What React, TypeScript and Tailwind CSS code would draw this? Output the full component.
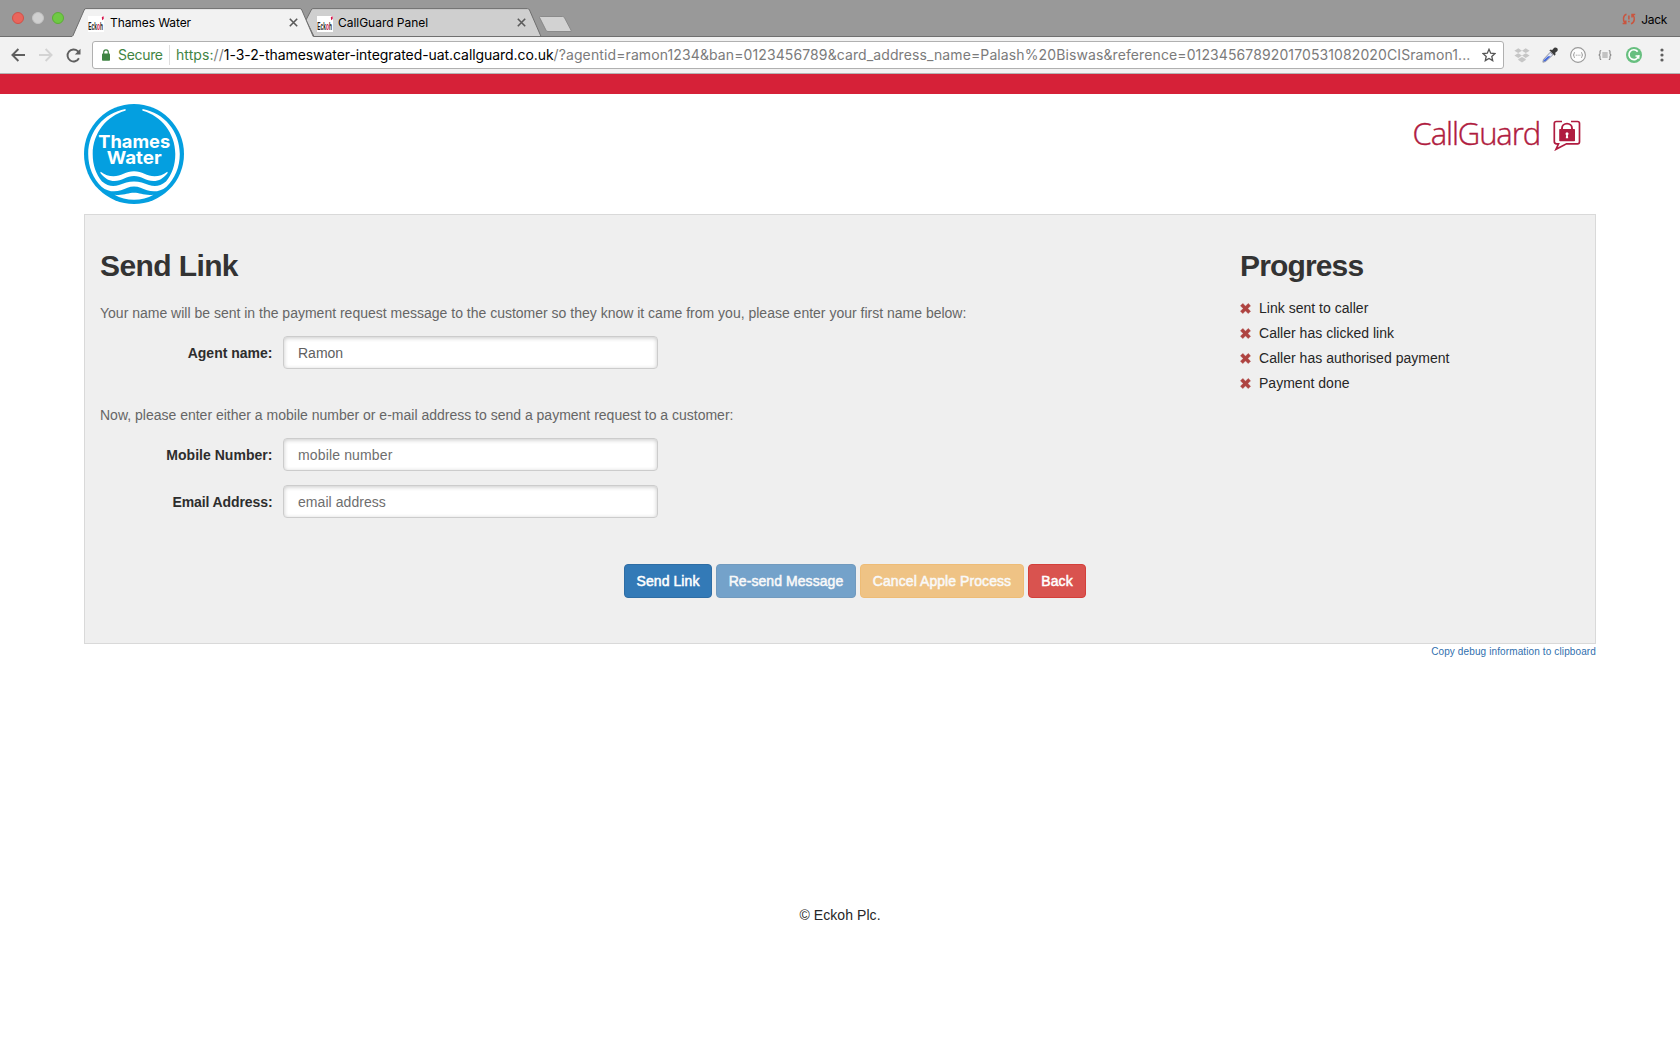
import React from "react";

const UI = "font-['Inter',sans-serif]";

function Favicon() {
  return (
    <svg width="16" height="16" viewBox="0 0 16 16" className="shrink-0">
      <rect width="16" height="16" fill="#fff" />
      <text x="0.8" y="13.800" transform="scale(0.46 1)" fontFamily="Liberation Sans, sans-serif" fontWeight="700" fontSize="10.500" fill="#1c1c1c">
        Eck<tspan fill="#d4144a">o</tspan>h
      </text>
      <path d="M13.800 1 15.700.2v2.800l-1.600 1.200z" fill="#d4144a" />
    </svg>
  );
}

function CloseX() {
  return (
    <svg width="9" height="9" viewBox="0 0 9 9" className="relative -top-px shrink-0" stroke="#5a5a5a" strokeWidth="1.6">
      <path d="M.8.8l7.4 7.4M8.2.8.8 8.2" />
    </svg>
  );
}

function TabStrip() {
  return (
    <div className="flex h-[37px] bg-[#999999]">
      <div className="flex w-[72px] shrink-0 items-center gap-2 border-b border-[#6f6f6f] pl-3">
        <span className="size-3 rounded-full border border-[#cf5148] bg-[#e9655c]" />
        <span className="size-3 rounded-full border border-[#c2c2c2] bg-[#d0d0d0]" />
        <span className="size-3 rounded-full border border-[#5bae35] bg-[#6fc944]" />
      </div>
      <div className="relative z-10 h-[37px] w-[242px] shrink-0">
        <svg width="242" height="37" viewBox="0 0 242 37" className="absolute inset-0">
          <path d="M0 37V36.5L1 36 12.2 10Q12.6 8.8 14 8.8H228Q229.300 8.800 229.800 10L241 36V37Z" fill="#f2f2f2" />
          <path d="M0 36.500L1 35.500 12.200 10Q12.600 8.600 14 8.600H228Q229.300 8.600 229.800 10L241.200 36.500" fill="none" stroke="#6f6f6f" />
        </svg>
        <div className="relative flex h-full items-center pt-[10px] pl-4 pr-[16px]">
          <Favicon />
          <span className={`relative -top-px ml-[6px] grow text-[12px] leading-4 tracking-[-0.09px] text-black ${UI}`}>Thames Water</span>
          <CloseX />
        </div>
      </div>
      <div className="relative -ml-[8px] h-[37px] w-[236px] shrink-0">
        <svg width="236" height="37" viewBox="0 0 236 37" className="absolute inset-0">
          <path d="M0 20 5.200 10Q5.600 8.600 7 8.600H221.500Q223 8.600 223.500 10L235 36.500H8Z" fill="#cfcfcf" stroke="#6f6f6f" />
        </svg>
        <div className="relative flex h-full items-center pt-[10px] pl-[11px] pr-[16px]">
          <Favicon />
          <span className={`relative -top-px ml-[5px] grow text-[12px] leading-4 tracking-[-0.03px] text-black ${UI}`}>CallGuard Panel</span>
          <CloseX />
        </div>
      </div>
      <div className="-ml-[4px] h-[37px] w-[38px] shrink-0">
        <svg width="38" height="37" viewBox="0 0 38 37">
          <path d="M2.300 16.500H24.500Q26 16.500 26.500 17.800L33.200 30.500Q33.400 31.500 32 31.500H10Q8.500 31.500 8 30.200L1.600 17.500Q1.400 16.500 2.300 16.500Z" fill="#d2d2d2" stroke="#858585" strokeWidth=".9" />
          <path d="M3 36.500H38" stroke="#6f6f6f" />
        </svg>
      </div>
      <div className="flex grow items-center justify-end border-b border-[#6f6f6f] pt-[3px] pr-[13px]">
        <svg width="14" height="12" viewBox="0 0 14 12" fill="none" stroke="#c9553f" strokeWidth="1.500" className="mr-[5px] mb-px">
          <path d="M4.500 1.300C1.200 2.200.4 7.300 3 10M.6 10.500h3.200V7.400M9 10.700c3.600-1 4.400-6 1.800-8.700M13.200 1.500H10v3.100" />
          <path d="M6.900 2.500v4M6.900 7.700v1.600" />
        </svg>
        <span className={`text-[12px] leading-4 tracking-[-0.300px] text-black ${UI}`}>Jack</span>
      </div>
    </div>
  );
}

function Toolbar() {
  return (
    <div className="flex h-[37px] items-center border-b border-[#b4b4b4] bg-[#f2f2f2]">
      <div className="flex w-[92px] shrink-0 items-center pl-[11px]">
        <svg width="14" height="14" viewBox="0 0 14 14" fill="none" stroke="#5f5f5f" strokeWidth="1.900">
          <path d="M14 7H1.600M7.400 1 1.400 7l6 6" />
        </svg>
        <svg width="14" height="14" viewBox="0 0 14 14" fill="none" stroke="#d3d3d3" strokeWidth="1.900" className="ml-[14px]">
          <path d="M0 7h12.400M6.600 1l6 6-6 6" />
        </svg>
        <svg width="15" height="15" viewBox="0 0 15 15" className="ml-[13px]">
          <path d="M12.900 10.200A6 6 0 1 1 11.800 3.200L13 4.500" fill="none" stroke="#5f5f5f" strokeWidth="1.900" />
          <path d="M14.500.8v5.700H8.800z" fill="#5f5f5f" />
        </svg>
      </div>
      <div className="flex h-7 w-[1412px] shrink-0 items-center rounded-[3px] border border-[#b0b0b0] bg-white whitespace-nowrap">
        <svg width="8" height="12" viewBox="0 0 8 12" className="ml-[9px] shrink-0">
          <rect y="4.500" width="8" height="7.200" rx=".8" fill="#3f8443" />
          <path d="M1.700 5V3.200a2.300 2.300 0 0 1 4.600 0V5" fill="none" stroke="#3f8443" strokeWidth="1.200" />
        </svg>
        <span className={`ml-2 w-[51px] text-[14px] leading-5 tracking-[-0.32px] text-[#3f8443] ${UI}`}>Secure</span>
        <span className="h-5 w-px bg-[#dedede]" />
        <span className={`ml-[6px] w-[1298px] text-[14px] leading-5 text-[#7b7b7b] ${UI}`}>
          <span className="tracking-[0.080px]"><span className="text-[#3f8443]">https:</span>//</span>
          <span className="tracking-[-0.070px] text-black">1-3-2-thameswater-integrated-uat.callguard.co.uk</span>
          <span className="tracking-[0.107px]">/?agentid=ramon1234&amp;ban=0123456789&amp;card_address_name=Palash%20Biswas&amp;reference=012345678920170531082020CISramon1...</span>
        </span>
        <svg width="14" height="14" viewBox="0 0 14 14" className="ml-[8px] shrink-0">
          <path d="M7 1.300 8.700 5.200l4.300.4-3.200 2.800.9 4.200L7 10.400l-3.700 2.200.9-4.200L1 5.600l4.300-.4z" fill="none" stroke="#555" strokeWidth="1.300" />
        </svg>
      </div>
      <div className="flex grow items-center">
        <svg width="16" height="15" viewBox="0 0 16 15" fill="#c6c6c6" className="ml-[10px]">
          <path d="M4.300.3 8 2.700 4.200 5 .4 2.700zM11.700.3l3.900 2.400L11.800 5 8 2.700zM4.200 5.300 8 7.600 4.300 10 .4 7.600zM11.800 5.300l3.800 2.300-3.900 2.400L8 7.600zM4.300 11 8 8.900l3.700 2.100v1.100L8 14.400l-3.700-2.300z" />
        </svg>
        <svg width="16" height="16" viewBox="0 0 16 16" className="ml-3">
          <path d="M8.300 5.200 10.900 7.800 3.600 14.500.9 15.200 1.500 12.400z" fill="#dfe4f4" stroke="#84889a" strokeWidth=".9" />
          <path d="M6 9.300h2.600L3.500 14l-2 .5.400-1.400z" fill="#3f66dc" />
          <path d="M7.300 3.200 9 2.400l1 .8L12.200.8a2.300 2.300 0 0 1 3.200 3.100L13 6.100l.7 1-1 1.700z" fill="#3b3b3b" />
        </svg>
        <svg width="16" height="16" viewBox="0 0 16 16" fill="none" stroke="#999" className="ml-3">
          <circle cx="8" cy="8" r="7.400" fill="#fcfcfc" strokeWidth="1.100" />
          <path d="M5 5.500q-1.200 0-1 1.300T3 8q1.200 0 1 1.300T5 10.600M11 5.500q1.200 0 1 1.300T13 8q-1.200 0-1 1.300t-1 1.300" strokeWidth=".9" />
          <path d="M5.800 8.200h4.600" strokeDasharray="1 .8" />
        </svg>
        <svg width="14" height="12" viewBox="0 0 14 12" fill="none" stroke="#878787" className="ml-[12px]">
          <path d="M3.200 1.500Q1.900 1.500 2 2.900 2.300 6 .6 6 2.300 6 2 9.100 1.900 10.500 3.200 10.500M10.800 1.500q1.300 0 1.200 1.400Q11.700 6 13.400 6 11.700 6 12 9.100q.1 1.400-1.200 1.400" strokeWidth="1.100" />
          <path d="M4.300 4h5.400M4.300 6h5.400M4.300 8h5.400" strokeWidth=".9" />
        </svg>
        <svg width="16" height="16" viewBox="0 0 16 16" className="ml-[14px]">
          <circle cx="8" cy="8" r="8" fill="#67bf7f" />
          <path d="M11.700 4.600A4.900 4.900 0 1 0 12.600 9H9.500" fill="none" stroke="#fff" strokeWidth="1.700" />
          <path d="M12.800 8.200v3.600" stroke="#fff" strokeWidth="1.200" />
        </svg>
        <svg width="4" height="14" viewBox="0 0 4 14" fill="#5f5f5f" className="ml-[18px]">
          <circle cx="2" cy="2" r="1.600" /><circle cx="2" cy="7" r="1.600" /><circle cx="2" cy="12" r="1.600" />
        </svg>
      </div>
    </div>
  );
}

function ThamesWaterLogo() {
  return (
    <svg width="100" height="100" viewBox="0 0 100 100">
      <circle cx="50" cy="50" r="50" fill="#049fe0" />
      <g fill="#fff">
        <path d="M41.300 5C20 9 4.200 27 4.200 50c0 13 5 24.500 13.300 32.700C24 88 31 88.200 37 86.200 42 84.500 45 82.500 50 82.500s8 2 13 3.700c6 2 13 1.800 19.500-3.500C90.800 74.500 95.800 63 95.800 50 95.800 27 80 9 58.700 5q-1 .9 0 1.800C77 11.800 91.300 29 91.300 50c0 11-3.300 20.300-9.300 27.500C76 82.700 70 82.700 65 80.900 60 79.100 55.500 77.400 50 77.400S40 79.100 35 80.900C30 82.700 24 82.700 18 77.500 12 70.300 8.700 61 8.700 50 8.700 29 23 11.800 41.300 6.800q1-.9 0-1.800Z" />
        <path d="M16.700 67.700q6 4.500 12.800 4.600C37 72.300 42 67.300 50 67.300s13 5 20.500 5q6.800-.1 12.800-4.600.8.800 0 1.800C79 74.500 75 77 69.500 77 62 77 57.500 72 50 72s-12 5-19.500 5C25 77 21 74.500 16.700 69.500q-.8-1 0-1.800Z" />
        <path d="M30.500 90.700C40 91.700 44 88.700 50 88.700s10 3 19.500 2C64 94.200 57 95.700 50 95.700s-14-1.500-19.500-5Z" />
        <text x="50.200" y="44" textAnchor="middle" fontFamily="Inter, sans-serif" fontWeight="700" fontSize="18" textLength="72" lengthAdjust="spacingAndGlyphs">Thames</text>
        <text x="50.200" y="59.800" textAnchor="middle" fontFamily="Inter, sans-serif" fontWeight="700" fontSize="18" textLength="55" lengthAdjust="spacingAndGlyphs">Water</text>
      </g>
    </svg>
  );
}

function CallGuardLogo() {
  return (
    <div className="flex items-start text-[#b01c40]">
      <span className="font-['Open_Sans',sans-serif] text-[31px] leading-[42px] font-light tracking-[-1.100px] [-webkit-text-stroke:0.4px_#b01c40]">CallGuard</span>
      <svg width="28" height="31" viewBox="0 0 28 31" className="mt-[8px] ml-[13px]">
        <path d="M9 1.500H3.300Q1.300 1.500 1.300 3.500V21.500Q1.300 23.800 3.500 23.800H5.500L3 29.300 13.500 23.800H24.500Q26.500 23.800 26.500 21.700V3.500Q26.500 1.500 24.500 1.500H18" fill="none" stroke="#b01c40" strokeWidth="1.700" />
        <path d="M9 10V8.200a5 4.600 0 0 1 10 0V10" fill="none" stroke="#b01c40" strokeWidth="1.900" />
        <rect x="6.200" y="9" width="15.800" height="12.300" rx=".8" fill="#b01c40" />
        <circle cx="14" cy="13.800" r="1.500" fill="#fff" />
        <path d="M13.300 14h1.400l.5 4.200h-2.400z" fill="#fff" />
      </svg>
    </div>
  );
}

const inputClass =
  "h-[33px] w-[375px] rounded-[4px] border border-[#cccccc] bg-white px-[14px] text-[14px] text-[#606060] shadow-[inset_0_1px_4px_rgba(0,0,0,0.22)] outline-none placeholder:text-[#6e6e6e] placeholder:opacity-100";

function Field({ label, value, placeholder, labelClass = "", inputExtra = "" }: { label: string; value?: string; placeholder?: string; labelClass?: string; inputExtra?: string }) {
  return (
    <div className="flex items-center">
      <label className={`w-[172.500px] shrink-0 text-right text-[14px] leading-5 font-bold text-[#2d2d2d] ${labelClass}`}>{label}</label>
      <input className={`ml-[10.500px] ${inputClass} ${inputExtra}`} defaultValue={value} placeholder={placeholder} />
    </div>
  );
}

const steps = ["Link sent to caller", "Caller has clicked link", "Caller has authorised payment", "Payment done"];

const buttons = [
  { label: "Send Link", style: "w-[88px] border-[#2e6da4] bg-[#337ab7]" },
  { label: "Re-send Message", style: "w-[140px] border-[#2e6da4] bg-[#337ab7] opacity-65" },
  { label: "Cancel Apple Process", style: "w-[164px] border-[#eea236] bg-[#f0ad4e] opacity-65" },
  { label: "Back", style: "w-[58px] border-[#d43f3a] bg-[#d9534f]" },
];

export default function App() {
  return (
    <div className="h-[1050px] overflow-hidden bg-white font-['Liberation_Sans',Arial,sans-serif] text-[14px] text-[#333333]">
      <TabStrip />
      <Toolbar />
      <div className="h-5 bg-[#d62138]" />
      <div className="mx-auto w-[1512px]">
        <header className="flex h-[120px] items-start justify-between pt-[10px] pr-[15px]">
          <ThamesWaterLogo />
          <div className="pt-[8px]"><CallGuardLogo /></div>
        </header>

        <main className="flex h-[430px] border border-[#d9d9d9] bg-[#efefef] px-[15px] pt-[34px]">
          <section className="w-[1140px] shrink-0">
            <h2 className="text-[30px] leading-[33px] font-bold tracking-[-0.600px]">Send Link</h2>
            <p className="mt-[21px] leading-5 text-[#666666]">
              Your name will be sent in the payment request message to the customer so they know it came from you, please enter your first name below:
            </p>
            <div className="mt-[13px]"><Field label="Agent name:" value="Ramon" /></div>
            <p className="mt-9 leading-5 text-[#666666]">
              Now, please enter either a mobile number or e-mail address to send a payment request to a customer:
            </p>
            <div className="mt-[13px] flex flex-col gap-[14px]">
              <Field label="Mobile Number:" placeholder="mobile number" labelClass="tracking-[0.030px]" inputExtra="tracking-[0.150px]" />
              <Field label="Email Address:" placeholder="email address" labelClass="tracking-[-0.100px]" inputExtra="tracking-[0.060px]" />
            </div>
            <div className="mt-[46px] ml-[524px] flex gap-1">
              {buttons.map((b) => (
                <button key={b.label} className={`h-[34px] shrink-0 rounded-[4px] border text-center text-[14px] leading-5 tracking-[0.070px] whitespace-nowrap text-white [-webkit-text-stroke:0.5px_white] ${b.style}`}>
                  {b.label}
                </button>
              ))}
            </div>
          </section>
          <aside>
            <h2 className="text-[30px] leading-[33px] font-bold tracking-[-0.850px]">Progress</h2>
            <ul className="mt-[14px] text-[#262626]">
              {steps.map((s) => (
                <li key={s} className="flex h-[25px] items-center tracking-[0.020px]">
                  <svg width="11" height="11" viewBox="0 0 11 11" className="mr-2" fill="#ae4340">
                    <path d="M2.800.5 5.500 3.200 8.200.5 10.500 2.800 7.800 5.500 10.500 8.200 8.200 10.500 5.500 7.800 2.800 10.500.5 8.200 3.200 5.500.5 2.800z" stroke="#ae4340" strokeWidth=".5" strokeLinejoin="round" />
                  </svg>
                  {s}
                </li>
              ))}
            </ul>
          </aside>
        </main>
        <div className="flex justify-end pt-px text-[10px] leading-[14px] tracking-[0.120px] text-[#2f6fae]"><a>Copy debug information to clipboard</a></div>
        <footer className="mt-[246px] text-center leading-5 tracking-[0.070px] text-[#262626]">© Eckoh Plc.</footer>
      </div>
    </div>
  );
}
